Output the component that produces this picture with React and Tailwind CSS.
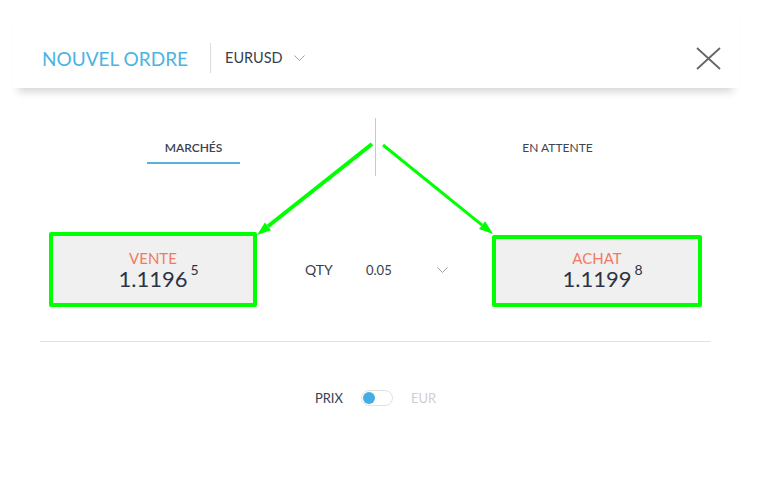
import React from "react";

function Chevron({ className = "" }) {
  return (
    <svg width="11" height="6" viewBox="0 0 11 6" className={className}>
      <path d="M0.5 0.5 L5.5 5.5 L10.5 0.5" fill="none" stroke="#9aa0a8" strokeWidth="1" />
    </svg>
  );
}

export default function App() {
  return (
    <div className="relative w-[761px] h-[490px] bg-white font-['Lato','Noto_Sans',sans-serif] overflow-hidden">
      <div className="ml-[12px] w-[727px]">
        <header className="relative z-10 h-[88px] flex items-center pt-[28px] pl-[30px] pr-[18px] bg-white shadow-[0_10px_8px_-6px_rgba(0,0,0,0.16)]">
          <div className="text-[19px] text-[#4bb4e2] leading-none">NOUVEL ORDRE</div>
          <div className="ml-[22px] w-px h-[30px] bg-[#dcdcdc]" />
          <div className="ml-[14px] text-[14.5px] text-[#37404e] leading-none">EURUSD</div>
          <Chevron className="ml-[11px]" />
          <div className="flex-1" />
          <svg width="25" height="23" viewBox="0 0 25 23">
            <path d="M1 1 L24 22 M24 1 L1 22" stroke="#666" strokeWidth="1.8" fill="none" />
          </svg>
        </header>

        <div className="mt-[30px] flex h-[58px]">
          <div className="flex-1 flex justify-center pt-[22px]">
            <div className="h-[24px] px-[18px] border-b-2 border-[#56b2dd] text-[12px] leading-[16px] font-semibold text-[#3a4250]">
              MARCHÉS
            </div>
          </div>
          <div className="w-px bg-[#c8c8c8]" />
          <div className="flex-1 flex justify-center pt-[22px]">
            <div className="h-[24px] text-[12px] leading-[16px] text-[#3e4654]">EN ATTENTE</div>
          </div>
        </div>

        <div className="mt-[56px] pl-[37px] flex items-end">
          <div className="w-[208px] h-[75px] border-4 border-[#00ff00] rounded-[2px] bg-[#f0f0f0] flex flex-col items-center pt-[13px]">
            <div className="text-[15px] leading-[18px] text-[#f37a61]">VENTE</div>
            <div className="relative text-[22px] leading-[24px] text-[#2b3445]">
              1.1196
              <span className="absolute left-full top-[-4px] ml-[3px] text-[14px] leading-[14px]">5</span>
            </div>
          </div>
          <div className="w-[235px] self-center flex items-center pl-[48px] text-[#37404e]">
            <div className="w-[61px] text-[14px] leading-[16px]">QTY</div>
            <div className="w-[71px] text-[13px] leading-[16px]">0.05</div>
            <Chevron />
          </div>
          <div className="w-[210px] h-[72px] border-4 border-[#00ff00] rounded-[2px] bg-[#f0f0f0] flex flex-col items-center pt-[10px]">
            <div className="text-[15px] leading-[18px] text-[#f37a61]">ACHAT</div>
            <div className="relative text-[22px] leading-[24px] text-[#2b3445]">
              1.1199
              <span className="absolute left-full top-[-4px] ml-[3px] text-[14px] leading-[14px]">8</span>
            </div>
          </div>
        </div>

        <div className="mt-[34px] mx-[28px] h-px bg-[#e2e2e2]" />

        <div className="mt-[48px] flex items-center justify-center gap-[18px]">
          <div className="text-[13px] leading-[16px] text-[#37404e]">PRIX</div>
          <div className="w-[32px] h-[16px] rounded-full border border-[#e2e2e2] flex items-center pl-[1px]">
            <div className="w-[12px] h-[12px] rounded-full bg-[#45ade2]" />
          </div>
          <div className="text-[13px] leading-[16px] text-[#cfcfcf]">EUR</div>
        </div>
      </div>

      <svg className="absolute left-0 top-0 pointer-events-none" width="761" height="490" viewBox="0 0 761 490">
        <line x1="372" y1="144" x2="268" y2="226.3" stroke="#00ff00" strokeWidth="4" />
        <polygon points="257,235 271.1,230.2 264.9,222.4" fill="#00ff00" />
        <line x1="383" y1="145" x2="482.1" y2="225.2" stroke="#00ff00" strokeWidth="3" />
        <polygon points="493,234 479,229.1 485.2,221.3" fill="#00ff00" />
      </svg>
    </div>
  );
}
